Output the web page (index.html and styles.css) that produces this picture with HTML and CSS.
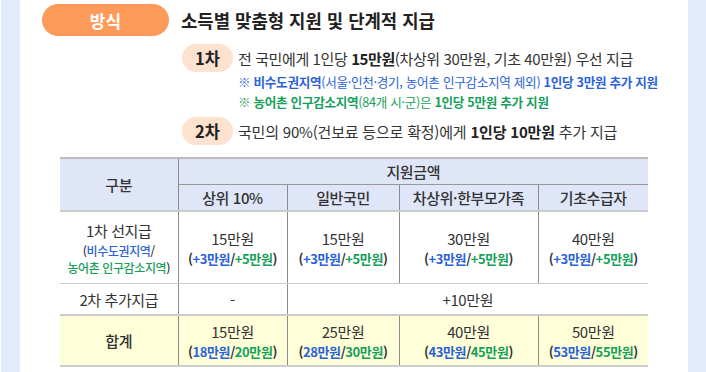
FILE: index.html
```html
<!DOCTYPE html>
<html lang="ko">
<head>
<meta charset="utf-8">
<link rel="stylesheet" href="styles.css">
</head>
<body>
<div class="page">
  <div class="strip strip-left"></div>
  <div class="main">
    <div class="head">
      <div class="pill">방식</div>
      <div class="title">소득별 맞춤형 지원 및 단계적 지급</div>
    </div>
    <div class="steps">
      <div class="step">
        <span class="badge">1차</span>
        <span class="step-text">전 국민에게 1인당 <b>15만원</b>(차상위 30만원, 기초 40만원) 우선 지급</span>
      </div>
      <div class="note blue">※ 비수도권지역<span class="thin">(서울·인천·경기, 농어촌 인구감소지역 제외)</span> 1인당 3만원 추가 지원</div>
      <div class="note green">※ 농어촌 인구감소지역<span class="thin">(84개 시·군)은</span> 1인당 5만원 추가 지원</div>
      <div class="step step2">
        <span class="badge">2차</span>
        <span class="step-text">국민의 90%<span class="small">(건보료 등으로 확정)</span>에게 <b>1인당 10만원</b> 추가 지급</span>
      </div>
    </div>
    <table class="tbl">
      <colgroup>
        <col class="c1"><col class="c2"><col class="c3"><col class="c4"><col class="c5">
      </colgroup>
      <thead>
        <tr class="h1">
          <th rowspan="2" class="first">구분</th>
          <th colspan="4" class="last">지원금액</th>
        </tr>
        <tr class="h2">
          <th>상위 10%</th>
          <th>일반국민</th>
          <th>차상위·한부모가족</th>
          <th class="last">기초수급자</th>
        </tr>
      </thead>
      <tbody>
        <tr class="r1">
          <td class="first">1차 선지급<span class="sub">(<span class="blue">비수도권지역</span>/</span><span class="sub"><span class="green">농어촌 인구감소지역</span>)</span></td>
          <td>15만원<span class="sub">(<span class="blue">+3만원</span>/<span class="green">+5만원</span>)</span></td>
          <td>15만원<span class="sub">(<span class="blue">+3만원</span>/<span class="green">+5만원</span>)</span></td>
          <td>30만원<span class="sub">(<span class="blue">+3만원</span>/<span class="green">+5만원</span>)</span></td>
          <td class="last">40만원<span class="sub">(<span class="blue">+3만원</span>/<span class="green">+5만원</span>)</span></td>
        </tr>
        <tr class="r2">
          <td class="first">2차 추가지급</td>
          <td>-</td>
          <td colspan="3" class="last">+10만원</td>
        </tr>
        <tr class="total">
          <td class="first">합계</td>
          <td>15만원<span class="sub">(<span class="blue">18만원</span>/<span class="green">20만원</span>)</span></td>
          <td>25만원<span class="sub">(<span class="blue">28만원</span>/<span class="green">30만원</span>)</span></td>
          <td>40만원<span class="sub">(<span class="blue">43만원</span>/<span class="green">45만원</span>)</span></td>
          <td class="last">50만원<span class="sub">(<span class="blue">53만원</span>/<span class="green">55만원</span>)</span></td>
        </tr>
      </tbody>
    </table>
  </div>
  <div class="strip strip-right"></div>
</div>
</body>
</html>
```
FILE: styles.css
```css
html, body {
  margin: 0;
  padding: 0;
  background: #ffffff;
}
body {
  font-family: "Noto Sans CJK KR", "Noto Sans", sans-serif;
  color: #333333;
}
.page {
  display: flex;
  width: 706px;
  height: 372px;
  overflow: hidden;
}
.strip {
  background: #e3eafb;
  flex: none;
}
.strip-left {
  width: 19px;
  margin-left: 1px;
}
.strip-right {
  width: 18px;
}
.main {
  flex: 1;
  padding-top: 4px;
}
.head {
  display: flex;
  align-items: center;
  gap: 12px;
  margin-left: 22px;
  height: 32px;
}
.pill {
  width: 127px;
  height: 32px;
  border-radius: 16px;
  background: #fe9b5a;
  color: #ffffff;
  font-weight: 700;
  font-size: 17px;
  display: flex;
  align-items: center;
  justify-content: center;
  flex: none;
}
.title {
  font-size: 17.8px;
  font-weight: 700;
  color: #222222;
  letter-spacing: 0;
}
.steps {
  margin-left: 162px;
  margin-top: 8px;
}
.step {
  display: flex;
  align-items: center;
  height: 28px;
}
.step2 {
  margin-top: 5px;
}
.badge {
  width: 51px;
  height: 28px;
  border-radius: 14px;
  background: #fde2cf;
  font-weight: 700;
  font-size: 16.5px;
  color: #222222;
  display: flex;
  align-items: center;
  justify-content: center;
  margin-right: 5px;
  flex: none;
}
.step-text {
  font-size: 15px;
  color: #333333;
  letter-spacing: -0.4px;
  white-space: nowrap;
}
.step2 .step-text {
  letter-spacing: -0.2px;
}
.step-text b {
  font-weight: 700;
  color: #222222;
}
.step-text .small {
  font-size: 15px;
}
.note {
  margin-left: 56px;
  font-size: 12.6px;
  font-weight: 700;
  height: 20px;
  line-height: 20px;
  letter-spacing: -0.3px;
  white-space: nowrap;
}
.note .thin {
  font-weight: 400;
}
.blue { color: #2a62d8; }
.green { color: #17a05a; }
.tbl {
  margin-left: 40px;
  margin-top: 12px;
  border-collapse: collapse;
  table-layout: fixed;
  width: 588px;
  font-size: 15px;
  color: #333333;
  letter-spacing: -0.4px;
}
.c1 { width: 118px; }
.c2 { width: 109px; }
.c3 { width: 112px; }
.c4 { width: 139px; }
.c5 { width: 110px; }
.tbl th, .tbl td {
  padding: 0;
  text-align: center;
  vertical-align: middle;
  border-left: 1px solid #8c8c8c;
  border-right: 1px solid #8c8c8c;
  border-bottom: 1px solid #cccccc;
  font-weight: 400;
}
.tbl th {
  font-weight: 500;
}
.tbl .first { border-left: none; }
.tbl .last { border-right: none; }
.tbl thead th {
  background: #dfe6f8;
}
.tbl thead tr.h1 th {
  border-top: 2px solid #bcbcbc;
  height: 25px;
}
.tbl thead tr.h1 th.last {
  border-bottom: 1px solid #999999;
}
.tbl thead tr.h2 th {
  border-bottom: 2px solid #cccccc;
  height: 25px;
}
.tbl thead th.first {
  border-bottom: 2px solid #cccccc;
}
.tbl tr.r1 td {
  height: 71px;
}
.tbl tr.r2 td {
  height: 30px;
}
.tbl tr.total td {
  height: 49px;
  background: #fefed9;
  border-top: 2px solid #cccccc;
  border-bottom: 2px solid #cccccc;
}
.tbl tr.total td.first {
  font-weight: 500;
}
.sub {
  display: block;
  font-size: 13px;
  font-weight: 700;
  line-height: 18px;
  color: #333333;
}
.tbl td .sub:first-of-type {
  margin-top: 1px;
}
.tbl tr.r1 td.first .sub {
  font-size: 12px;
  line-height: 17px;
  font-weight: 500;
}
```
